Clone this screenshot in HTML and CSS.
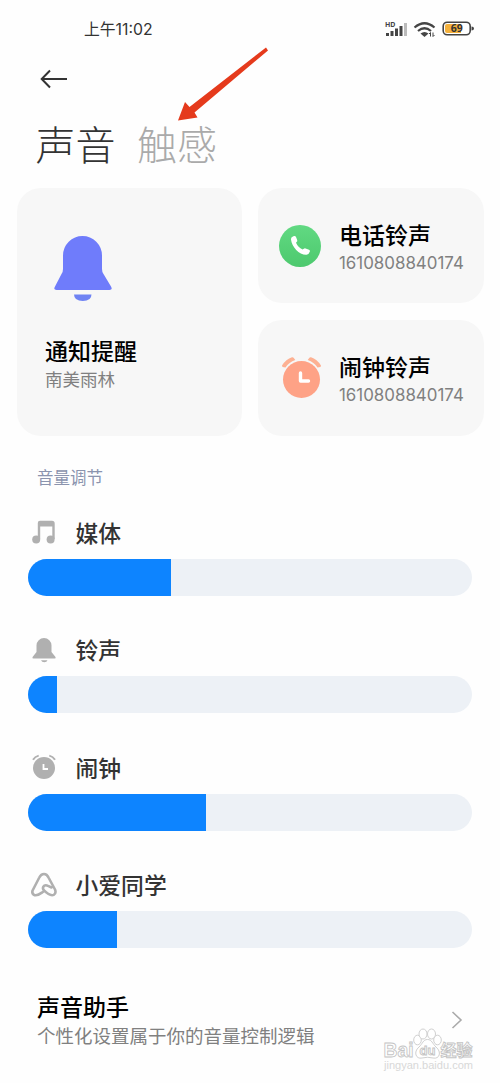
FILE: index.html
```
<!DOCTYPE html>
<html lang="zh-CN">
<head>
    <meta charset="UTF-8">
    <meta name="viewport" content="width=device-width, initial-scale=1.0">
    <title>声音</title>
    <link rel="stylesheet" href="styles.css">
</head>
<body>
    <div class="status-bar">
        <span class="time">上午11:02</span>
        <svg class="status-icons" width="92" height="20" viewBox="0 0 92 20">
            <text class="hd" x="1" y="6.5">HD</text>
            <g fill="#444">
                <rect x="2" y="13" width="3" height="3"/>
                <rect x="6.5" y="11" width="3" height="5"/>
                <rect x="11" y="8.5" width="3" height="7.5"/>
                <rect x="15.5" y="6" width="3" height="10"/>
                <rect x="20" y="3" width="3" height="13" fill="#bbb"/>
            </g>
            <g fill="none" stroke="#444" stroke-width="2.2">
                <path d="M30.5 7.5Q40.5-1 50.5 7.5"/>
                <path d="M34 11Q40.5 5.5 47 11"/>
            </g>
            <path d="M36.5 13.5Q40.5 10.5 44.5 13.5L40.5 17z" fill="#444"/>
            <path d="M46.5 16.5v-4M45 14l1.5-1.5M49 12.5v4M50.5 15L49 16.5" stroke="#444" fill="none"/>
            <rect x="59.2" y="2.2" width="27" height="12.6" rx="4" fill="#fff" stroke="#444" stroke-width="1.6"/>
            <path d="M63 4h14v9H63q-2 0-2-2V6q0-2 2-2z" fill="#f4b13c"/>
            <path d="M87.5 6.5q2.5 0 2.5 2t-2.5 2z" fill="#444"/>
            <text class="battery" x="72.7" y="12.4">69</text>
        </svg>
    </div>
    <header>
        <svg class="back" width="28" height="20" viewBox="0 0 28 20">
            <path d="M27 10H2M10 1.5L1.7 10l8.3 8.5" fill="none" stroke="#333" stroke-width="2"/>
        </svg>
        <div class="tabs">
            <span class="tab active">声音</span>
            <span class="tab">触感</span>
        </div>
        <svg class="pointer" width="92" height="76" viewBox="0 0 92 76">
            <path d="M89 1.5L91 4.5 17.500 66.500 20.500 71.500 1 74.500 8 56 12.500 61z" fill="#e53a1c"/>
        </svg>
    </header>
    <div class="cards">
        <div class="card card-large">
            <svg class="bell" width="60" height="67" viewBox="0 0 60 67">
                <path d="M10 19.500A19.500 19.500 0 0 1 49 19.500V33Q49 36 50.500 38L58 50.500Q60 54 56.500 54H3.500Q0 54 2 50.500L8.500 38Q10 36 10 33z" fill="#6f7cfb"/>
                <path d="M21 58.500h17.500q0 6.500-8.700 6.500T21 58.500z" fill="#6f83f3"/>
            </svg>
            <h2>通知提醒</h2>
            <p>南美雨林</p>
        </div>
        <div class="card">
            <svg class="card-icon" width="44" height="44" viewBox="0 0 44 44">
                <defs>
                    <linearGradient id="green" x1="0" y1="0" x2="0" y2="1">
                        <stop offset="0" stop-color="#61d982"/>
                        <stop offset="1" stop-color="#4dc96e"/>
                    </linearGradient>
                </defs>
                <circle cx="22" cy="22" r="21" fill="url(#green)"/>
                <path d="M13 15.500q-.2-2 1.500-2.800l1.500-.6q1.500-.3 2 1l1.200 2.900q.4 1.300-.6 2l-.6.800q2 4.600 6.600 6.800l1.200-.9q.8-.7 1.800-.3l3.400 1.300q1.300.6.900 1.900-.8 2.700-3.400 3.200C21.500 31.200 13.800 23 13 15.500z" fill="#fff"/>
            </svg>
            <div>
                <h2>电话铃声</h2>
                <p>1610808840174</p>
            </div>
        </div>
        <div class="card">
            <svg class="card-icon" width="44" height="44" viewBox="0 0 44 44">
                <circle cx="23.500" cy="23.500" r="18.500" fill="#fea286"/>
                <path d="M4 9.500Q8 3 14 1.200q1.300-.2 1.800.8l1.500 2Q11 6 7.500 11.500L4.500 11z" fill="#fdb193"/>
                <path d="M43 9.500Q39 3 33 1.200q-1.300-.2-1.800.8l-1.500 2Q36 6 39.500 11.500L42.500 11z" fill="#fdb193"/>
                <path d="M22.500 17v8h8" fill="none" stroke="#fff" stroke-width="3.400" stroke-linecap="round" stroke-linejoin="round"/>
            </svg>
            <div>
                <h2>闹钟铃声</h2>
                <p>1610808840174</p>
            </div>
        </div>
    </div>
    <h3 class="section-title">音量调节</h3>
    <div class="volumes">
        <div class="volume">
            <div class="volume-label">
                <svg width="28" height="26" viewBox="0 0 28 26">
                    <path d="M9 20V4Q9 3 10 3h12Q23.500 3 23.500 4.500V20" fill="none" stroke="#b0b0b0" stroke-width="2.400"/>
                    <path d="M8 3h16v4.500H8z" fill="#b0b0b0"/>
                    <circle cx="6.200" cy="20.500" r="4" fill="#b0b0b0"/>
                    <circle cx="20.600" cy="20.500" r="4" fill="#b0b0b0"/>
                </svg>
                <span>媒体</span>
            </div>
            <div class="bar"><div class="fill" style="width: 32.1%"></div></div>
        </div>
        <div class="volume">
            <div class="volume-label">
                <svg width="28" height="26" viewBox="0 0 28 26">
                    <path d="M6.500 8.500a7.500 7.500 0 0 1 15 0V15l4 5q.8 1.500-1 1.500H3.600q-1.800 0-1-1.500l3.900-5z" fill="#b0b0b0"/>
                    <path d="M11 23.200h6.500q-.7 2-3.200 2t-3.300-2z" fill="#b0b0b0"/>
                </svg>
                <span>铃声</span>
            </div>
            <div class="bar"><div class="fill" style="width: 6.6%"></div></div>
        </div>
        <div class="volume">
            <div class="volume-label">
                <svg width="28" height="26" viewBox="0 0 28 26">
                    <circle cx="14" cy="14" r="11" fill="#b0b0b0"/>
                    <path d="M3 5.700Q5 2.500 8.700 1.600M25 5.700Q23 2.500 19.300 1.600" fill="none" stroke="#b0b0b0" stroke-width="2"/>
                    <path d="M13.500 10v5h4.500" fill="none" stroke="#fff" stroke-width="1.800"/>
                </svg>
                <span>闹钟</span>
            </div>
            <div class="bar"><div class="fill" style="width: 40%"></div></div>
        </div>
        <div class="volume">
            <div class="volume-label">
                <svg width="28" height="26" viewBox="0 0 28 26">
                    <path d="M13.500 19.500C10.500 21.500 8 24 4.800 23.200Q1.500 22 2.600 18.500L9.300 5.500Q11 2 14 2T18.500 5.500L25 17.500Q26.500 21.300 23.700 22.900C20 24.500 16.500 21 13.800 18.200Q12 15.800 14 13.800Q15.800 12.700 18 13.900L21.500 15.500" fill="none" stroke="#b0b0b0" stroke-width="2.600" stroke-linecap="round" stroke-linejoin="round"/>
                </svg>
                <span>小爱同学</span>
            </div>
            <div class="bar"><div class="fill" style="width: 20%"></div></div>
        </div>
    </div>
    <div class="assistant">
        <div>
            <h2>声音助手</h2>
            <p>个性化设置属于你的音量控制逻辑</p>
        </div>
        <svg class="chevron" width="12" height="18" viewBox="0 0 12 18">
            <path d="M1.500 1l8.500 8-8.500 8" fill="none" stroke="#aaa" stroke-width="1.600"/>
        </svg>
    </div>
    <svg class="watermark" width="96" height="48" viewBox="0 0 96 48">
        <g fill="#fff" stroke="#d0d0d0" stroke-width="1">
            <ellipse cx="36.500" cy="13" rx="3.800" ry="4.800"/>
            <ellipse cx="42" cy="7" rx="4" ry="5"/>
            <ellipse cx="50.500" cy="7" rx="4" ry="5"/>
            <ellipse cx="56.500" cy="13" rx="3.800" ry="4.800"/>
            <path d="M46.500 12.500C42 12.500 41.500 17 38 20C32 25 35 32.500 41 31Q46.500 29.500 52 31C58.500 32.500 61 25 55 20C51.500 17 51 12.500 46.500 12.500z"/>
        </g>
        <text class="wm-logo" x="2.500" y="30" textLength="30" lengthAdjust="spacingAndGlyphs">Bai</text>
        <text class="wm-du" x="38.500" y="28">du</text>
        <text class="wm-cn" x="59.500" y="29">经验</text>
        <text class="wm-url" x="3" y="42" textLength="89" lengthAdjust="spacingAndGlyphs">jingyan.baidu.com</text>
    </svg>
</body>
</html>
```
FILE: styles.css
```
* {
    box-sizing: border-box;
}
body {
    font-family: "Noto Sans CJK SC", sans-serif;
    position: relative;
    width: 500px;
    height: 1083px;
    margin: 0;
    overflow: hidden;
    background-color: #fefefe;
    color: #000;
}
h2, h3, p {
    margin: 0;
}
svg {
    display: block;
    flex-shrink: 0;
}
.status-bar {
    display: flex;
    justify-content: space-between;
    height: 58px;
    padding: 20px 24px 0 84px;
}
.time {
    font-family: Inter, "Noto Sans CJK SC", sans-serif;
    font-size: 15.8px;
    line-height: 20px;
    color: #333;
}
.hd {
    font: bold 7px "Noto Sans", sans-serif;
    fill: #444;
}
.battery {
    font: bold 10.5px "Noto Sans", sans-serif;
    text-anchor: middle;
    fill: #333;
}
header {
    position: relative;
    height: 130px;
    padding: 11px 35.5px 0;
}
.back {
    margin-left: 4.5px;
}
.tabs {
    display: flex;
    gap: 21.5px;
    margin-top: 24px;
}
.tab {
    font-size: 40px;
    font-weight: 300;
    line-height: 60px;
    color: #aaa;
}
.tab.active {
    color: #333;
}
.pointer {
    position: absolute;
    left: 177px;
    top: -12px;
}
.cards {
    display: grid;
    grid-template-columns: 225px 226px;
    grid-template-rows: 115px 116px;
    gap: 17px 16px;
    padding-left: 17px;
}
.card {
    display: flex;
    align-items: center;
    padding: 4px 0 0 20px;
    border-radius: 24px;
    background-color: #f7f7f7;
}
.card-large {
    display: block;
    grid-row: span 2;
    padding: 48px 28px;
}
.bell {
    margin: 0 0 32px 8px;
}
.card-icon {
    margin: -4px 17px 0 0;
}
h2 {
    font-size: 23px;
    font-weight: 500;
    line-height: 31px;
}
p {
    font-size: 18.5px;
    line-height: 27px;
    color: #808080;
}
.card p {
    font-family: Inter, "Noto Sans CJK SC", sans-serif;
    font-size: 16.9px;
}
.card-large p {
    font-size: 17.5px;
}
.section-title {
    margin: 29px 0 0 37px;
    font-size: 16.5px;
    font-weight: 400;
    line-height: 24px;
    color: #8b94ae;
}
.volumes {
    display: grid;
    gap: 27.5px;
    padding: 17px 28px 0;
}
.volume-label {
    display: flex;
    align-items: center;
    gap: 18px;
    height: 40px;
    padding: 0 0 13px 1.5px;
    font-size: 22.8px;
    font-weight: 500;
    color: #333;
}
.volume {
    height: 90px;
    padding-top: 12.5px;
}
.bar {
    height: 37px;
    overflow: hidden;
    border-radius: 19px;
    background-color: #edf1f6;
}
.fill {
    height: 100%;
    background-color: #0d84ff;
}
.assistant {
    display: flex;
    align-items: center;
    justify-content: space-between;
    margin-top: 42px;
    padding: 0 37px;
}
.watermark {
    position: absolute;
    left: 381px;
    top: 1027px;
}
.wm-logo, .wm-du, .wm-cn {
    font: bold 21px "Liberation Sans", sans-serif;
    fill: #fff;
    stroke: #c4c4c4;
    stroke-width: .9px;
}
.wm-du {
    font-size: 13px;
}
.wm-cn {
    font: bold 16px "Noto Sans CJK SC", sans-serif;
}
.wm-url {
    font: 11px "Liberation Sans", sans-serif;
    fill: #d8d8d8;
}
```
